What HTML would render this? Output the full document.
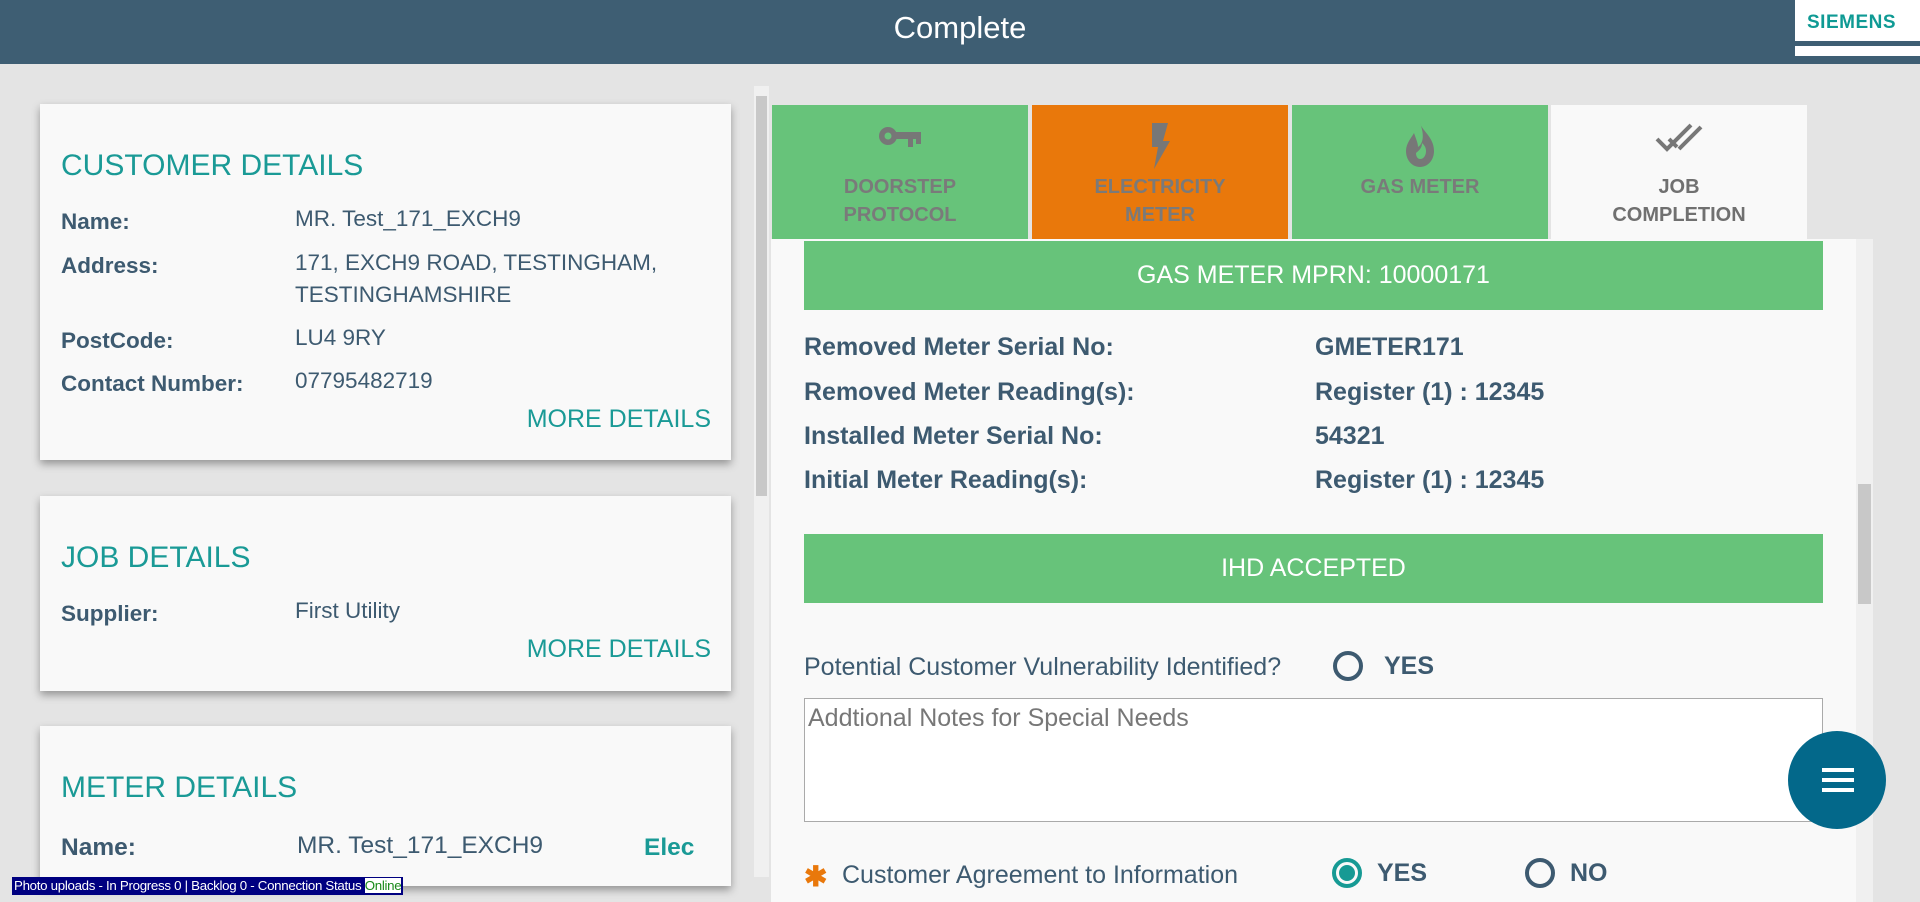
<!DOCTYPE html>
<html><head><meta charset="utf-8"><style>
*{box-sizing:border-box;margin:0;padding:0}
body{width:1920px;height:902px;overflow:hidden;background:#e4e4e4;font-family:"Liberation Sans",sans-serif;position:relative;color:#3d5a70}
.hdr{position:absolute;left:0;top:0;width:1920px;height:64px;background:#3e5e73;color:#fff;text-align:center;font-size:31px;line-height:56px}
.logo{position:absolute;left:1795px;top:0;width:125px;height:56px;background:#fff}
.logo span{position:absolute;left:12px;top:12px;color:#0f9a94;font-weight:bold;font-size:19px;letter-spacing:0.5px}
.logo i{position:absolute;left:0;right:0;top:41px;height:5px;background:#3e5e73}
.card{position:absolute;left:40px;width:691px;background:#f9f9f9;box-shadow:0 4px 8px rgba(0,0,0,.35)}
.t{position:absolute;left:21px;color:#1a9a96;font-size:30px}
.l{position:absolute;left:21px;font-weight:bold;font-size:22.5px}
.v{position:absolute;left:255px;font-size:22.5px;line-height:32px}
.md{position:absolute;right:20px;color:#1a9a96;font-size:25px}
.lsb{position:absolute;left:754px;top:86px;width:15px;height:791px;background:#f0f0f0}
.status{position:absolute;left:12px;top:877px;height:18px;background:#000080;color:#fff;font-size:13.3px;line-height:18px;padding:0 2px;letter-spacing:-0.3px}
.status b{font-weight:normal;background:#fff;color:#1a8a1a}
.tab{position:absolute;top:105px;height:134px;width:256px;text-align:center;color:#7a7a7a;font-weight:bold;font-size:20px;line-height:28px}
.tab div{position:absolute;top:68px;width:100%}
.tab svg{position:absolute;top:18px;left:50%;transform:translateX(-50%)}
.panel{position:absolute;left:771px;top:239px;width:1102px;height:663px;background:#f9f9f9}
.bar{position:absolute;left:33px;width:1019px;background:#67c37a;color:#fff;text-align:center;font-size:25px}
.rl{position:absolute;left:33px;font-weight:bold;font-size:25px}
.rv{position:absolute;left:544px;font-weight:bold;font-size:25px}
.rsb{position:absolute;left:1085px;top:0;width:17px;height:663px;background:#f0f0f0}
.q{position:absolute;font-size:25px}
.radio{position:absolute;width:30px;height:30px;border:4px solid #3d5a70;border-radius:50%}
.fab{position:absolute;left:1788px;top:731px;width:98px;height:98px;border-radius:50%;background:#03688a}
.fab i{position:absolute;left:34px;width:32px;height:4px;background:#fff}
</style></head><body>
<div class="hdr">Complete</div>
<div class="logo"><span>SIEMENS</span><i></i></div>

<div class="card" style="top:104px;height:356px">
<div class="t" style="top:45px">CUSTOMER DETAILS</div>
<div class="l" style="top:105px">Name:</div><div class="v" style="top:99px">MR. Test_171_EXCH9</div>
<div class="l" style="top:149px">Address:</div><div class="v" style="top:143px">171, EXCH9 ROAD, TESTINGHAM,<br>TESTINGHAMSHIRE</div>
<div class="l" style="top:224px">PostCode:</div><div class="v" style="top:218px">LU4 9RY</div>
<div class="l" style="top:267px">Contact Number:</div><div class="v" style="top:261px">07795482719</div>
<div class="md" style="top:301px">MORE DETAILS</div>
</div>
<div class="card" style="top:496px;height:195px">
<div class="t" style="top:45px">JOB DETAILS</div>
<div class="l" style="top:105px">Supplier:</div><div class="v" style="top:99px">First Utility</div>
<div class="md" style="top:139px">MORE DETAILS</div>
</div>
<div class="card" style="top:726px;height:160px">
<div class="t" style="top:45px">METER DETAILS</div>
<div class="l" style="top:108px;font-size:24.5px">Name:</div><div class="v" style="top:104px;left:257px;font-size:24.5px">MR. Test_171_EXCH9</div>
<div style="position:absolute;left:604px;top:108px;color:#1a9a96;font-weight:bold;font-size:24.5px">Elec</div>
</div>
<div class="lsb"><div style="position:absolute;left:2px;top:10px;width:11px;height:400px;background:#c8c8c8"></div></div>
<div class="status">Photo uploads - In Progress 0 | Backlog 0 - Connection Status <b>Online</b></div>

<div class="tab" style="left:772px;background:#67c37a">
<svg width="46" height="30" viewBox="0 0 46 30"><circle cx="11" cy="13" r="9" fill="#777"/><circle cx="11" cy="13" r="3.5" fill="#67c37a"/><rect x="18" y="9" width="26" height="7" fill="#777"/><rect x="31" y="14" width="5" height="10" fill="#777"/><rect x="39" y="14" width="5" height="7" fill="#777"/></svg>
<div>DOORSTEP<br>PROTOCOL</div></div>
<div class="tab" style="left:1032px;background:#e9780b">
<svg width="24" height="46" viewBox="0 0 24 46"><path d="M4 0H20L15 18H22L6 46L10 24H4Z" fill="#777"/></svg>
<div>ELECTRICITY<br>METER</div></div>
<div class="tab" style="left:1292px;background:#67c37a">
<svg width="32" height="44" viewBox="0 0 32 44"><path d="M16 0C18 8 30 14 30 28C30 37 24 44 16 44C8 44 2 37 2 28C2 20 8 14 10 10C12 16 14 20 14 24C20 20 20 10 16 0Z M16 36C20 36 22 32 22 28C22 24 20 22 18 20C18 26 14 28 12 30C12 34 14 36 16 36Z" fill="#777" fill-rule="evenodd"/></svg>
<div>GAS METER</div></div>
<div class="tab" style="left:1551px;background:#f9f9f9;color:#707070">
<svg width="48" height="30" viewBox="0 0 48 30"><path d="M2 16L12 26L36 2M14 16L22 24M24 26L46 4" stroke="#777" stroke-width="4" fill="none"/></svg>
<div>JOB<br>COMPLETION</div></div>

<div class="panel">
<div class="bar" style="top:2px;height:69px;line-height:69px">GAS METER MPRN: 10000171</div>
<div class="rl" style="top:94px">Removed Meter Serial No:</div><div class="rv" style="top:94px">GMETER171</div>
<div class="rl" style="top:139px">Removed Meter Reading(s):</div><div class="rv" style="top:139px">Register (1) : 12345</div>
<div class="rl" style="top:183px">Installed Meter Serial No:</div><div class="rv" style="top:183px">54321</div>
<div class="rl" style="top:227px">Initial Meter Reading(s):</div><div class="rv" style="top:227px">Register (1) : 12345</div>
<div class="bar" style="top:295px;height:69px;line-height:69px">IHD ACCEPTED</div>
<div class="q" style="left:33px;top:414px">Potential Customer Vulnerability Identified?</div>
<div class="radio" style="left:562px;top:412px"></div>
<div class="q" style="left:613px;top:413px;font-weight:bold">YES</div>
<div style="position:absolute;left:33px;top:459px;width:1019px;height:124px;border:1px solid #aaa;background:#fff;font-size:25px;color:#777;padding:5px 3px">Addtional Notes for Special Needs</div>
<div class="q" style="left:33px;top:621px;color:#e9780b;font-size:28px;font-weight:bold">✱</div>
<div class="q" style="left:71px;top:622px">Customer Agreement to Information</div>
<div class="radio" style="left:561px;top:619px;border-color:#169a94"><i style="position:absolute;left:3px;top:3px;width:16px;height:16px;border-radius:50%;background:#169a94"></i></div>
<div class="q" style="left:606px;top:620px;font-weight:bold">YES</div>
<div class="radio" style="left:754px;top:619px"></div>
<div class="q" style="left:799px;top:620px;font-weight:bold">NO</div>
<div class="rsb"><div style="position:absolute;left:2px;top:245px;width:13px;height:120px;background:#c8c8c8"></div></div>
</div>
<div class="fab"><i style="top:37px"></i><i style="top:47px"></i><i style="top:57px"></i></div>
</body></html>
